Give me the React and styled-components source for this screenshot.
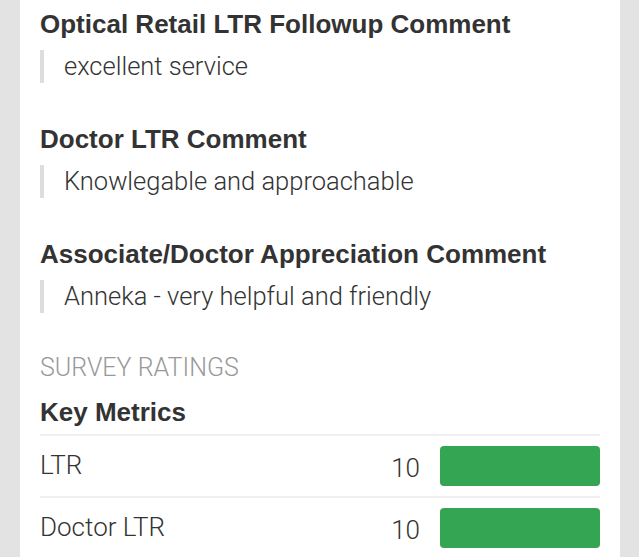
import React from "react"
import styled, { createGlobalStyle } from "styled-components"

const Global = createGlobalStyle`
  html, body {
    margin: 0;
    padding: 0;
    background: #e3e3e3;
  }
  body {
    font-family: 'Liberation Sans', Arial, sans-serif;
    color: #333;
  }
`

const Panel = styled.div`
  margin-left: 20px;
  width: 560px;
  min-height: 557px;
  background: #fff;
  padding: 8px 20px 0;
`

const Section = styled.section`
  margin-bottom: 40px;
`

const Heading = styled.h3`
  margin: 0 0 10px;
  font-family: 'Liberation Sans', Arial, sans-serif;
  font-size: 26px;
  line-height: 32px;
  font-weight: bold;
  color: #333;
`

const Quote = styled.blockquote`
  margin: 0;
  border-left: 4px solid #ddd;
  padding-left: 20px;
  font-family: Roboto, 'Liberation Sans', sans-serif;
  font-weight: 300;
  font-size: 25.5px;
  line-height: 33px;
  color: #333;
`

const Label = styled.div`
  font-family: Roboto, 'Liberation Sans', sans-serif;
  font-weight: 300;
  font-size: 25px;
  line-height: 30px;
  color: #999;
  text-transform: uppercase;
`

const SubHeading = styled.h4`
  margin: 13px 0 6px;
  font-family: 'Liberation Sans', Arial, sans-serif;
  font-size: 26px;
  line-height: 32px;
  font-weight: bold;
  color: #333;
`

const Metrics = styled.div`
  display: flex;
  flex-direction: column;
`

const Row = styled.div`
  display: flex;
  align-items: center;
  height: 60px;
  border-top: 2px solid #efefef;
`

const Name = styled.div`
  flex: 1;
  font-family: Roboto, 'Liberation Sans', sans-serif;
  font-weight: 300;
  font-size: 26px;
  color: #333;
  margin-bottom: 2px;
`

const Score = styled.div`
  font-family: Roboto, 'Liberation Sans', sans-serif;
  font-weight: 300;
  font-size: 26px;
  color: #333;
  margin-right: 20px;
  margin-top: 4px;
`

const Bar = styled.div`
  width: 160px;
  height: 40px;
  margin-bottom: 1px;
  border-radius: 4px;
  background: #34a552;
`

const comments = [
  ["Optical Retail LTR Followup Comment", "excellent service"],
  ["Doctor LTR Comment", "Knowlegable and approachable"],
  ["Associate/Doctor Appreciation Comment", "Anneka - very helpful and friendly"],
]

const metrics = [
  ["LTR", 10],
  ["Doctor LTR", 10],
]

export default function App() {
  return (
    <>
      <Global />
      <Panel>
        {comments.map(([title, text]) => (
          <Section key={title}>
            <Heading>{title}</Heading>
            <Quote>{text}</Quote>
          </Section>
        ))}
        <Label>Survey Ratings</Label>
        <SubHeading>Key Metrics</SubHeading>
        <Metrics>
          {metrics.map(([name, score]) => (
            <Row key={name}>
              <Name>{name}</Name>
              <Score>{score}</Score>
              <Bar />
            </Row>
          ))}
        </Metrics>
      </Panel>
    </>
  )
}
